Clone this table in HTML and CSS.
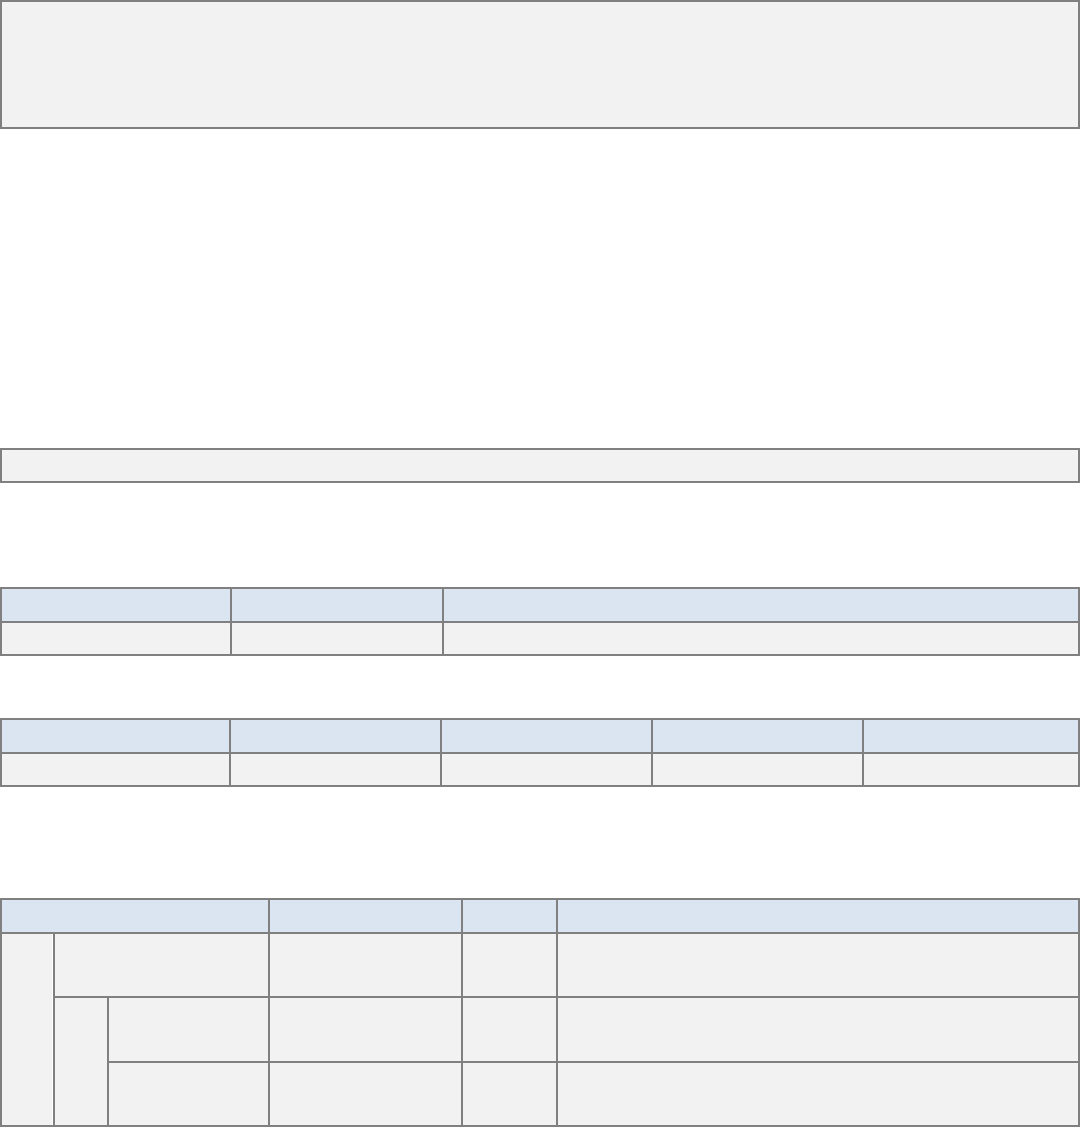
FILE: index.html
```html
<!DOCTYPE html>
<html lang="en">
<head>
<meta charset="utf-8">
<title>Document</title>
<link rel="stylesheet" href="styles.css">
</head>
<body>
<main class="page">
  <div class="box box-large"></div>
  <div class="box box-small"></div>

  <div class="grid grid-one">
    <div class="cell head"></div>
    <div class="cell head"></div>
    <div class="cell head"></div>
    <div class="cell"></div>
    <div class="cell"></div>
    <div class="cell"></div>
  </div>

  <div class="grid grid-two">
    <div class="cell head"></div>
    <div class="cell head"></div>
    <div class="cell head"></div>
    <div class="cell head"></div>
    <div class="cell head"></div>
    <div class="cell"></div>
    <div class="cell"></div>
    <div class="cell"></div>
    <div class="cell"></div>
    <div class="cell"></div>
  </div>

  <div class="grid grid-three">
    <div class="cell head span-abc"></div>
    <div class="cell head"></div>
    <div class="cell head"></div>
    <div class="cell head"></div>

    <div class="cell col-a"></div>
    <div class="cell span-bc"></div>
    <div class="cell"></div>
    <div class="cell"></div>
    <div class="cell"></div>

    <div class="cell col-b"></div>
    <div class="cell"></div>
    <div class="cell"></div>
    <div class="cell"></div>
    <div class="cell"></div>

    <div class="cell"></div>
    <div class="cell"></div>
    <div class="cell"></div>
    <div class="cell"></div>
  </div>
</main>
</body>
</html>
```
FILE: styles.css
```css
html, body {
  margin: 0;
  padding: 0;
  background: #ffffff;
  font-family: "Liberation Sans", Arial, sans-serif;
}

.page {
  display: flex;
  flex-direction: column;
  width: 1080px;
}

.box {
  box-sizing: border-box;
  border: 2px solid #808080;
  background: #f2f2f2;
}

.box-large {
  height: 129px;
}

.box-small {
  height: 35px;
  margin-top: 319px;
}

.grid {
  display: grid;
  gap: 2px;
  padding: 2px;
  background: #808080;
}

.cell {
  background: #f2f2f2;
}

.cell.head {
  background: #dbe5f1;
}

.grid-one {
  margin-top: 104px;
  grid-template-columns: 228px 210px 634px;
  grid-template-rows: 32px 31px;
}

.grid-two {
  margin-top: 62px;
  grid-template-columns: 227px 209px 209px 209px 214px;
  grid-template-rows: 32px 31px;
}

.grid-three {
  margin-top: 111px;
  grid-template-columns: 51px 52px 159px 191px 93px 520px;
  grid-template-rows: 32px 62px 63px 62px;
}

.span-abc {
  grid-column: 1 / span 3;
}

.col-a {
  grid-row: 2 / span 3;
  box-shadow: inset -1px 0 0 #ffffff;
}

.span-bc {
  grid-column: 2 / span 2;
}

.col-b {
  grid-row: 3 / span 2;
}
```
